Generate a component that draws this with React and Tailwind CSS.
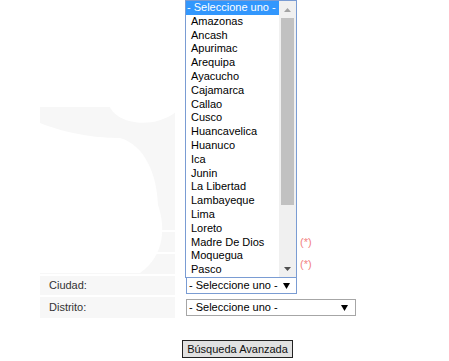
import React from "react";

const options = [
  "- Seleccione uno -",
  "Amazonas",
  "Ancash",
  "Apurimac",
  "Arequipa",
  "Ayacucho",
  "Cajamarca",
  "Callao",
  "Cusco",
  "Huancavelica",
  "Huanuco",
  "Ica",
  "Junin",
  "La Libertad",
  "Lambayeque",
  "Lima",
  "Loreto",
  "Madre De Dios",
  "Moquegua",
  "Pasco"
];

function Arrow({ className = "" }) {
  return (
    <svg width="7" height="6" viewBox="0 0 7 6" className={className}>
      <path d="M0 0 L7 0 L3.5 6 Z" fill="#000" />
    </svg>
  );
}

function FakeSelect({ width, focused, arrowGap, hidden }) {
  return (
    <div
      className={`flex items-center h-[17px] border bg-white ${width} ${
        focused ? "border-[#7a9cd3]" : "border-[#a6a6a6]"
      } ${hidden ? "invisible" : ""}`}
    >
      <span className="pl-[2px] text-[11px] leading-none text-black whitespace-nowrap">
        - Seleccione uno -
      </span>
      <span className="flex-1" />
      <Arrow className={arrowGap} />
    </div>
  );
}

function Row({ label, children, h }) {
  return (
    <div className={`flex ${h}`}>
      <div className="w-[135px] bg-[#f7f7f7] flex items-center pl-[9px] text-[11px] text-[#333]">
        {label}
      </div>
      <div className="flex items-center pl-[11px]">{children}</div>
    </div>
  );
}

export default function App() {
  return (
    <div className="relative w-[449px] h-[361px] bg-white overflow-hidden font-['Liberation_Sans',Arial,sans-serif]">
      {/* form table */}
      <div className="pl-[40px] pt-[107px] w-[435px] flex flex-col">
        <div className="flex flex-col gap-[2px]">
          <Row h="h-[123px]" label="" />
          {/* these two selects sit behind the open list */}
          <Row h="h-[20px]" label="">
            <FakeSelect width="w-[111px]" hidden />
            <span className="ml-[3px] text-[11px] text-[#f28282]">(*)</span>
          </Row>
          <Row h="h-[20px]" label="">
            <FakeSelect width="w-[111px]" hidden />
            <span className="ml-[3px] text-[11px] text-[#f28282]">(*)</span>
          </Row>
          <Row h="h-[19px]" label="Ciudad:">
            <FakeSelect width="w-[111px]" focused arrowGap="mr-[6px]" />
          </Row>
          <Row h="h-[21px]" label="Distrito:">
            <FakeSelect width="w-[170px]" arrowGap="mr-[7px]" />
          </Row>
        </div>
        <div className="flex justify-center mt-[22px]">
          <button className="w-[111px] h-[18px] bg-[#e1e1e1] border border-[#222] text-[11px] leading-none text-[#111]">
            Búsqueda Avanzada
          </button>
        </div>
      </div>

      <svg
        className="absolute left-0 top-0 pointer-events-none"
        width="449"
        height="361"
        viewBox="0 0 449 361"
      >
        <path d="M110 107 C 116 122, 150 131, 176 112 L176 107 Z" fill="#fff" />
        <path
          d="M40 123 C 70 135, 100 138, 120 138 C 145 145, 157 175, 158 205 C 165 225, 166 255, 140 273 L40 273 Z"
          fill="#fff"
        />
      </svg>

      {/* open dropdown list */}
      <div className="absolute left-[185px] top-0 w-[112px] h-[278px] border border-[#7a9cd3] bg-white flex">
        <div className="flex-1 flex flex-col">
          {options.map((o, i) => (
            <div
              key={o}
              className={`h-[13.8px] leading-[13.8px] text-[11px] whitespace-nowrap ${
                i === 0 ? "pl-[1px] bg-[#3297fd] text-white" : "pl-[5px] text-black"
              }`}
            >
              {o}
            </div>
          ))}
        </div>
        <div className="w-[17px] bg-[#f0f0f0] flex flex-col">
          <div className="h-[17px] flex items-center justify-center">
            <svg width="7" height="4" viewBox="0 0 7 4">
              <path d="M0 4 L3.5 0 L7 4 Z" fill="#a3a3a3" />
            </svg>
          </div>
          <div className="h-[187px] mx-[2px] bg-[#c1c1c1]" />
          <div className="flex-1" />
          <div className="h-[17px] flex items-center justify-center">
            <svg width="7" height="4" viewBox="0 0 7 4">
              <path d="M0 0 L7 0 L3.5 4 Z" fill="#505050" />
            </svg>
          </div>
        </div>
      </div>
    </div>
  );
}
